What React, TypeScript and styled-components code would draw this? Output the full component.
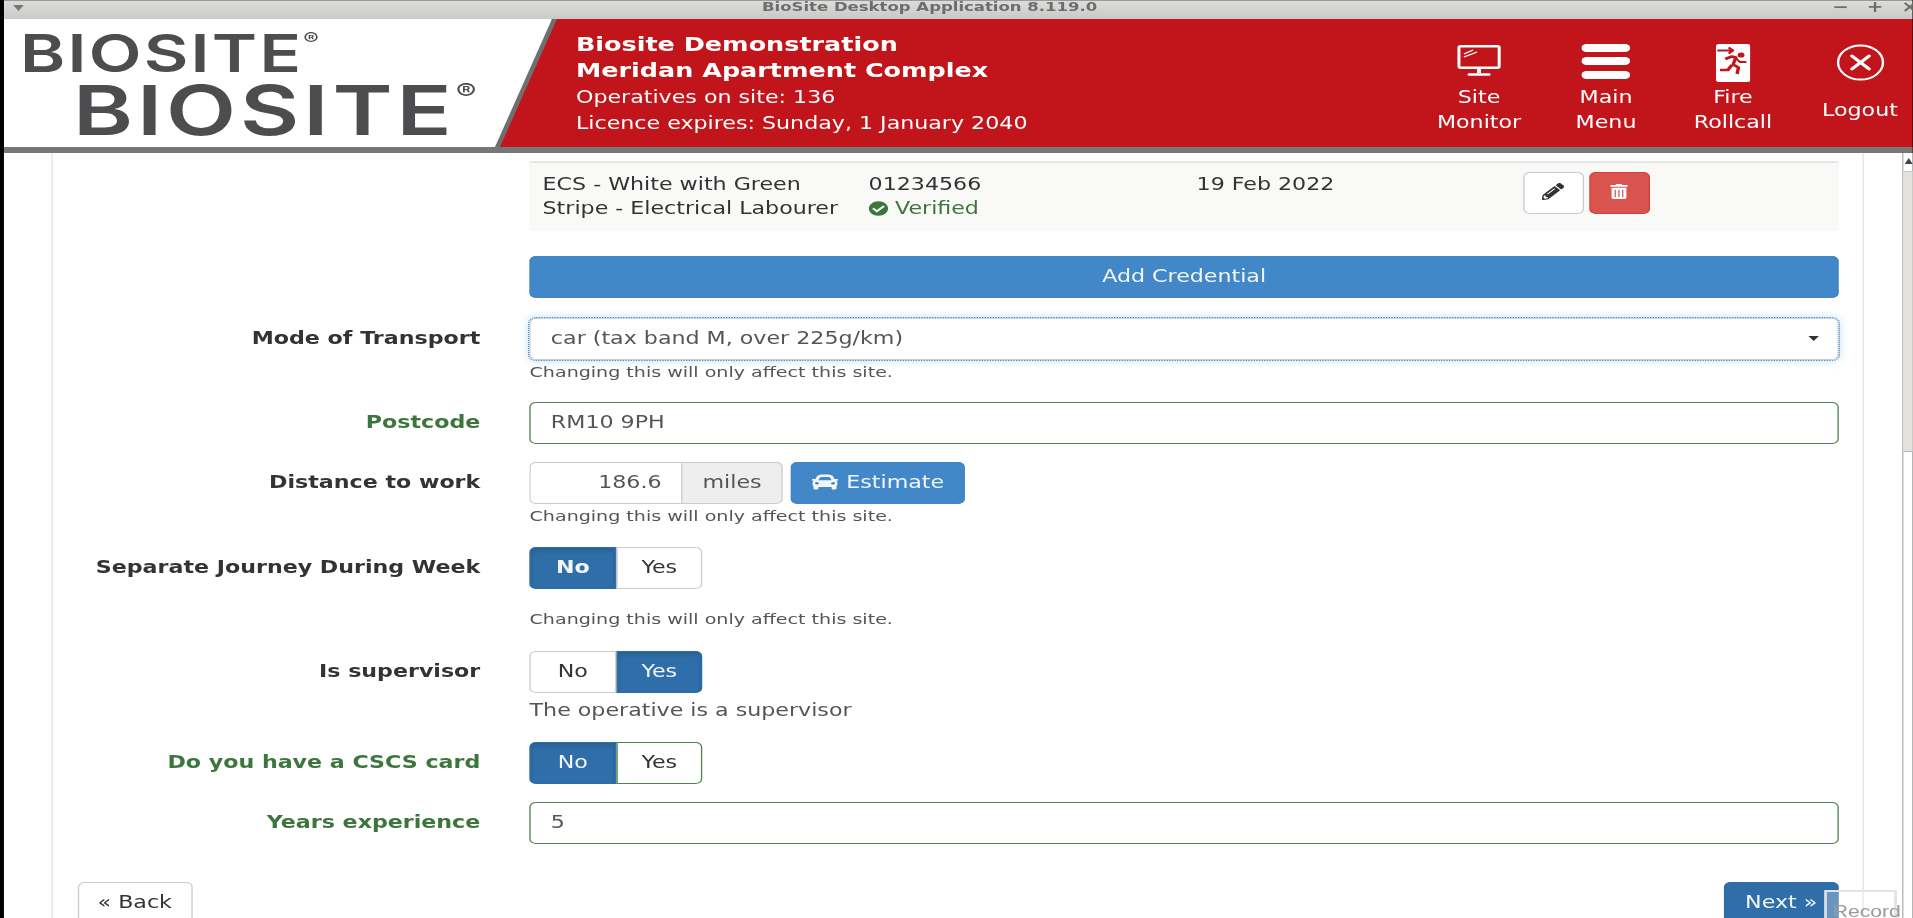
import styled, { createGlobalStyle } from 'styled-components';
import { FaCar, FaCheckCircle, FaPencilAlt, FaTrashAlt } from 'react-icons/fa';

// the captured screen is stretched sideways, so the whole app is laid out narrow and scaled
const STRETCH = 1.32;
const px = (n: number) => `${(n / STRETCH).toFixed(2)}px`;

const GlobalStyle = createGlobalStyle`
  html, body {
    margin: 0;
    height: 100%;
    overflow: hidden;
    background: #000;
  }
  * {
    box-sizing: border-box;
  }
`;

const Screen = styled.div`
  position: relative;
  width: ${px(1913)};
  height: 918px;
  transform: scaleX(${STRETCH});
  transform-origin: 0 0;
  filter: blur(0.5px);
  overflow: hidden;
  display: flex;
  flex-direction: column;
  padding-left: ${px(4)};
  background: #000;
  font-family: 'DejaVu Sans', sans-serif;
  font-size: 16.8px;
  line-height: 24px;
  color: #333;
`;

const TitleBar = styled.div`
  height: 19px;
  flex-shrink: 0;
  display: grid;
  grid-template-columns: ${px(758)} auto 1fr;
  align-items: start;
  background: linear-gradient(#dcdcda, #c9c9c7);
  border-top: 1px solid #9a9a9a;
  color: #6d6d6d;
  font-size: 12.5px;
  font-weight: 700;
  line-height: 12px;
`;

const WindowMenu = styled.div`
  margin: 4px 0 0 ${px(9)};
  width: 0;
  border-left: ${px(6)} solid transparent;
  border-right: ${px(6)} solid transparent;
  border-top: 6px solid #777;
`;

const WindowControls = styled.div`
  justify-self: end;
  display: flex;
  gap: ${px(18)};
  margin-right: ${px(-5)};
  font-size: 15px;
`;

const Header = styled.header`
  height: 134px;
  flex-shrink: 0;
  display: flex;
  background: #c1151b;
  border-bottom: 6px solid #777;
  color: #fff;
`;

const LogoEdge = styled.div`
  width: ${px(553)};
  flex-shrink: 0;
  background: #6f6f6f;
  clip-path: polygon(0 0, 100% 0, calc(100% - ${px(57)}) 100%, 0 100%);
`;

const LogoFace = styled.div`
  width: calc(100% - ${px(5)});
  height: 100%;
  padding: 12px 0 0 ${px(16)};
  background: #fff;
  clip-path: polygon(0 0, 100% 0, calc(100% - ${px(57)}) 100%, 0 100%);
  font-family: Inter, 'Liberation Sans', sans-serif;
  font-weight: 600;
  color: #4d4d4f;
`;

const LogoWord = styled.div<{ $size: number; $line: number; $indent: number; $spacing: number }>`
  margin-left: ${(p) => px(p.$indent)};
  font-size: ${(p) => p.$size}px;
  letter-spacing: ${(p) => p.$spacing}px;
  line-height: ${(p) => p.$line}px;
  white-space: nowrap;

  sup {
    font-size: 0.34em;
    font-weight: 400;
    line-height: 0;
    vertical-align: 1.5em;
  }
`;

const SiteInfo = styled.div`
  flex: 1;
  padding: 13px 0 0 ${px(19)};
  font-size: 16.8px;
  line-height: 26px;
`;

const SiteName = styled.div`
  font-weight: 700;
  font-size: 19.3px;
`;

const Nav = styled.nav`
  display: flex;
  gap: ${px(21)};
`;

const NavItem = styled.div`
  width: ${px(106)};
  padding-top: 25px;
  display: flex;
  flex-direction: column;
  align-items: center;
  text-align: center;
  font-size: 16.8px;
  line-height: 25px;
`;

const NavIcon = styled.div`
  height: 35px;
  margin-bottom: 6px;
  display: flex;
  align-items: flex-start;
`;

const NavLabel = styled.div`
  height: 50px;
  display: flex;
  align-items: center;
`;

const Body = styled.div`
  flex: 1;
  min-height: 0;
  display: flex;
  background: #fff;
`;

const Scroller = styled.main`
  flex: 1;
  padding: 0 ${px(38)} 0 ${px(48)};
  overflow: hidden;
`;

const Panel = styled.div`
  min-height: 100%;
  padding: 8px ${px(24)} 0;
  border-left: ${px(2)} solid #e3e3e3;
  border-right: ${px(2)} solid #e3e3e3;
`;

const ControlColumn = styled.div`
  margin-left: ${px(452.3)};
`;

const CredentialRow = styled.div`
  height: 70px;
  padding: 9px 0 0 ${px(13)};
  display: grid;
  grid-template-columns: ${px(326)} ${px(328)} ${px(327)} auto;
  background: #f9f9f7;
  border-top: 2px solid #e8e8e8;
`;

const VerifiedText = styled.div`
  display: flex;
  align-items: center;
  gap: 5px;
  color: #3c763d;

  svg {
    font-size: 15px;
  }
`;

const RowActions = styled.div`
  display: flex;
  align-items: flex-start;
  gap: ${px(6)};
`;

const IconButton = styled.button<{ $danger?: boolean }>`
  width: ${px(60)};
  height: 42px;
  padding: 0 0 4px;
  display: flex;
  align-items: center;
  justify-content: center;
  font-size: ${(p) => (p.$danger ? '15px' : '17px')};
  color: ${(p) => (p.$danger ? '#fff' : '#333')};
  background: ${(p) => (p.$danger ? '#d9534f' : '#fff')};
  border: 1px solid ${(p) => (p.$danger ? '#d43f3a' : '#ccc')};
  border-radius: 5px;
`;

const AddButton = styled.button`
  width: 100%;
  height: 42px;
  margin: 25px 0 20px;
  padding: 0 0 2px;
  display: block;
  background: #4287c7;
  border: 1px solid #3f84c4;
  border-radius: 5px;
  color: #f2f6fb;
  font: inherit;
`;

const FormRow = styled.div<{ $after: number }>`
  display: flex;
  margin-bottom: ${(p) => p.$after}px;
`;

const FieldLabel = styled.label<{ $valid?: boolean }>`
  width: ${px(403)};
  height: 42px;
  flex-shrink: 0;
  margin-right: ${px(49.3)};
  padding-bottom: 2px;
  display: flex;
  align-items: center;
  justify-content: flex-end;
  font-weight: 700;
  color: ${(p) => (p.$valid ? '#3c763d' : '#333')};
`;

const Field = styled.div`
  flex: 1;
  min-width: 0;
`;

const SelectBox = styled.div`
  position: relative;
  height: 42px;
  padding: 0 0 3px ${px(20)};
  display: flex;
  align-items: center;
  color: #555;
  background: #fff;
  border: 1px solid #ccc;
  border-radius: 5px;
  outline: 1px dotted #428bca;
  box-shadow: 0 0 8px rgba(102, 175, 233, 0.45);

  &::after {
    content: '';
    position: absolute;
    right: ${px(18)};
    top: 17px;
    border-left: ${px(6)} solid transparent;
    border-right: ${px(6)} solid transparent;
    border-top: 5px solid #333;
  }
`;

const TextInput = styled.input<{ $valid?: boolean }>`
  display: block;
  width: 100%;
  height: 42px;
  padding: 0 ${px(20)} 3px;
  color: #555;
  font: inherit;
  background: #fff;
  border: 1px solid ${(p) => (p.$valid ? '#4f8250' : '#ccc')};
  border-radius: 5px;
`;

const HelpText = styled.div<{ $top: number; $large?: boolean }>`
  margin-top: ${(p) => p.$top}px;
  font-size: ${(p) => (p.$large ? '16.8px' : '14.45px')};
  line-height: 20px;
  color: #555;
`;

const DistanceGroup = styled.div`
  display: flex;
  align-items: stretch;
  height: 42px;
`;

const DistanceInput = styled.input`
  width: ${px(152)};
  padding: 0 ${px(20)} 3px 0;
  text-align: right;
  color: #555;
  font: inherit;
  background: #fff;
  border: 1px solid #ccc;
  border-right: 0;
  border-radius: 5px 0 0 5px;
`;

const Addon = styled.div`
  width: ${px(101)};
  padding-bottom: 3px;
  display: flex;
  align-items: center;
  justify-content: center;
  color: #555;
  background: #eee;
  border: 1px solid #ccc;
  border-radius: 0 5px 5px 0;
`;

const EstimateButton = styled.button`
  width: ${px(175)};
  margin-left: ${px(8)};
  padding: 0 0 3px;
  display: flex;
  align-items: center;
  justify-content: center;
  gap: ${px(8)};
  color: #f2f6fb;
  font: inherit;
  background: #4287c7;
  border: 1px solid #3f84c4;
  border-radius: 5px;

  svg {
    font-size: 20px;
  }
`;

const Toggle = styled.div`
  display: flex;
  height: 42px;
`;

const ToggleButton = styled.button<{ $active?: boolean; $strong?: boolean; $valid?: boolean }>`
  width: ${px(86.5)};
  padding: 0 0 3px;
  font: inherit;
  font-weight: ${(p) => (p.$strong ? 700 : 400)};
  color: ${(p) => (p.$active ? '#f2f6fb' : '#333')};
  background: ${(p) => (p.$active ? '#2f6ea9' : '#fff')};
  border: 1px solid ${(p) => (p.$active ? '#2e6da4' : p.$valid ? '#4f8250' : '#ccc')};
  box-shadow: ${(p) => (p.$active ? 'inset 0 3px 5px rgba(0, 0, 0, 0.125)' : 'none')};

  &:first-child {
    border-radius: 5px 0 0 5px;
  }
  &:last-child {
    border-radius: 0 5px 5px 0;
  }
`;

const Footer = styled.div`
  display: flex;
  justify-content: space-between;
`;

const NavButton = styled.button<{ $primary?: boolean }>`
  width: ${px(115)};
  height: 42px;
  padding: 0 0 2px;
  font: inherit;
  color: ${(p) => (p.$primary ? '#f2f6fb' : '#333')};
  background: ${(p) => (p.$primary ? '#2f6ea9' : '#fff')};
  border: 1px solid ${(p) => (p.$primary ? '#2e6da4' : '#ccc')};
  border-radius: 5px;
`;

const Scrollbar = styled.div`
  width: ${px(11)};
  flex-shrink: 0;
  display: flex;
  flex-direction: column;
  background: #fff;
  border-left: ${px(2)} solid #b5b5b5;
`;

const ScrollUp = styled.div`
  height: 18px;
  padding: 5px 0 0 ${px(2)};

  &::before {
    content: '';
    display: block;
    width: 0;
    border-left: ${px(5)} solid transparent;
    border-right: ${px(5)} solid transparent;
    border-bottom: 6px solid #444;
  }
`;

const ScrollThumb = styled.div`
  height: 281px;
  background: #e5e2dd;
  border-top: 1px solid #c9c9c9;
  border-bottom: 1px solid #b5b5b5;
`;

const RecordBadge = styled.div`
  position: absolute;
  left: ${px(1824)};
  top: 890px;
  width: ${px(73)};
  height: 40px;
  padding: 10px 0 0 ${px(6)};
  background: rgba(255, 255, 255, 0.28);
  border: 2px solid #e2e2e2;
  font-family: 'Liberation Sans', sans-serif;
  font-size: 16px;
  line-height: 20px;
  color: #9a9a9a;
`;

const MonitorIcon = () => (
  <svg width="33" height="33" viewBox="0 0 33 33" fill="none" stroke="#fff">
    <rect x="1.2" y="2.2" width="30.6" height="21.6" rx="1.5" strokeWidth="2.4" />
    <path d="M5 10l7-4M5 13l10-5" strokeWidth="1.2" />
    <path d="M16.5 24v5" strokeWidth="3" />
    <path d="M9 30.5h15" strokeWidth="2.4" strokeLinecap="round" />
  </svg>
);

const MenuIcon = () => (
  <svg width="37" height="35" viewBox="0 0 37 35" fill="#fff">
    <rect y="0" width="37" height="8" rx="4" />
    <rect y="13" width="37" height="8" rx="4" />
    <rect y="27" width="37" height="8" rx="4" />
  </svg>
);

const ExitIcon = () => (
  <svg width="26" height="38" viewBox="0 0 26 38">
    <rect width="26" height="38" rx="2" fill="#fff" />
    <g fill="none" stroke="#c1151b" strokeWidth="1.8" strokeLinejoin="round">
      <path d="M1 6.5h11M9.5 3.5l3.5 3-3.5 3" />
      <path d="M7 15l5-2.5 3 1-2 7 4 3-1 6.5" strokeWidth="2.6" />
      <path d="M12 21l-3 5H3" strokeWidth="2.6" />
      <path d="M15 14l3 4h5" />
    </g>
    <circle cx="19" cy="11" r="2.6" fill="#c1151b" />
  </svg>
);

const LogoutIcon = () => (
  <svg width="37" height="37" viewBox="0 0 37 37" fill="none" stroke="#fff">
    <circle cx="18.5" cy="18.5" r="17" strokeWidth="1.8" />
    <path d="M12 12l13 13M25 12L12 25" strokeWidth="2.8" strokeLinecap="round" />
  </svg>
);

const App = () => {
    return (
        <>
            <GlobalStyle />
            <Screen>
                <TitleBar>
                    <WindowMenu />
                    <div>BioSite Desktop Application 8.119.0</div>
                    <WindowControls>
                        <span>−</span>
                        <span>+</span>
                        <span>×</span>
                    </WindowControls>
                </TitleBar>
                <Header>
                    <LogoEdge>
                        <LogoFace>
                            <LogoWord $size={52} $line={46} $indent={0} $spacing={1.7}>
                                BIOSITE<sup>®</sup>
                            </LogoWord>
                            <LogoWord $size={69} $line={67} $indent={53} $spacing={3}>
                                BIOSITE<sup>®</sup>
                            </LogoWord>
                        </LogoFace>
                    </LogoEdge>
                    <SiteInfo>
                        <SiteName>Biosite Demonstration</SiteName>
                        <SiteName>Meridan Apartment Complex</SiteName>
                        <div>Operatives on site: 136</div>
                        <div>Licence expires: Sunday, 1 January 2040</div>
                    </SiteInfo>
                    <Nav>
                        <NavItem>
                            <NavIcon><MonitorIcon /></NavIcon>
                            <NavLabel>Site<br />Monitor</NavLabel>
                        </NavItem>
                        <NavItem>
                            <NavIcon><MenuIcon /></NavIcon>
                            <NavLabel>Main<br />Menu</NavLabel>
                        </NavItem>
                        <NavItem>
                            <NavIcon><ExitIcon /></NavIcon>
                            <NavLabel>Fire<br />Rollcall</NavLabel>
                        </NavItem>
                        <NavItem>
                            <NavIcon><LogoutIcon /></NavIcon>
                            <NavLabel>Logout</NavLabel>
                        </NavItem>
                    </Nav>
                </Header>
                <Body>
                    <Scroller>
                        <Panel>
                            <ControlColumn>
                                <CredentialRow>
                                    <div>ECS - White with Green<br />Stripe - Electrical Labourer</div>
                                    <div>
                                        01234566
                                        <VerifiedText><FaCheckCircle /> Verified</VerifiedText>
                                    </div>
                                    <div>19 Feb 2022</div>
                                    <RowActions>
                                        <IconButton><FaPencilAlt /></IconButton>
                                        <IconButton $danger><FaTrashAlt /></IconButton>
                                    </RowActions>
                                </CredentialRow>
                                <AddButton>Add Credential</AddButton>
                            </ControlColumn>

                            <FormRow $after={20}>
                                <FieldLabel>Mode of Transport</FieldLabel>
                                <Field>
                                    <SelectBox>car (tax band M, over 225g/km)</SelectBox>
                                    <HelpText $top={2}>Changing this will only affect this site.</HelpText>
                                </Field>
                            </FormRow>

                            <FormRow $after={18}>
                                <FieldLabel $valid>Postcode</FieldLabel>
                                <Field>
                                    <TextInput $valid readOnly value="RM10 9PH" />
                                </Field>
                            </FormRow>

                            <FormRow $after={21}>
                                <FieldLabel>Distance to work</FieldLabel>
                                <Field>
                                    <DistanceGroup>
                                        <DistanceInput readOnly value="186.6" />
                                        <Addon>miles</Addon>
                                        <EstimateButton><FaCar /> Estimate</EstimateButton>
                                    </DistanceGroup>
                                    <HelpText $top={2}>Changing this will only affect this site.</HelpText>
                                </Field>
                            </FormRow>

                            <FormRow $after={22}>
                                <FieldLabel>Separate Journey During Week</FieldLabel>
                                <Field>
                                    <Toggle>
                                        <ToggleButton $active $strong>No</ToggleButton>
                                        <ToggleButton>Yes</ToggleButton>
                                    </Toggle>
                                    <HelpText $top={20}>Changing this will only affect this site.</HelpText>
                                </Field>
                            </FormRow>

                            <FormRow $after={22}>
                                <FieldLabel>Is supervisor</FieldLabel>
                                <Field>
                                    <Toggle>
                                        <ToggleButton>No</ToggleButton>
                                        <ToggleButton $active>Yes</ToggleButton>
                                    </Toggle>
                                    <HelpText $top={7} $large>The operative is a supervisor</HelpText>
                                </Field>
                            </FormRow>

                            <FormRow $after={18}>
                                <FieldLabel $valid>Do you have a CSCS card</FieldLabel>
                                <Field>
                                    <Toggle>
                                        <ToggleButton $active>No</ToggleButton>
                                        <ToggleButton $valid>Yes</ToggleButton>
                                    </Toggle>
                                </Field>
                            </FormRow>

                            <FormRow $after={38}>
                                <FieldLabel $valid>Years experience</FieldLabel>
                                <Field>
                                    <TextInput $valid readOnly value="5" />
                                </Field>
                            </FormRow>

                            <Footer>
                                <NavButton>« Back</NavButton>
                                <NavButton $primary>Next »</NavButton>
                            </Footer>
                        </Panel>
                    </Scroller>
                    <Scrollbar>
                        <ScrollUp />
                        <ScrollThumb />
                    </Scrollbar>
                </Body>
                <RecordBadge>Record</RecordBadge>
            </Screen>
        </>
    );
};

export default App;
